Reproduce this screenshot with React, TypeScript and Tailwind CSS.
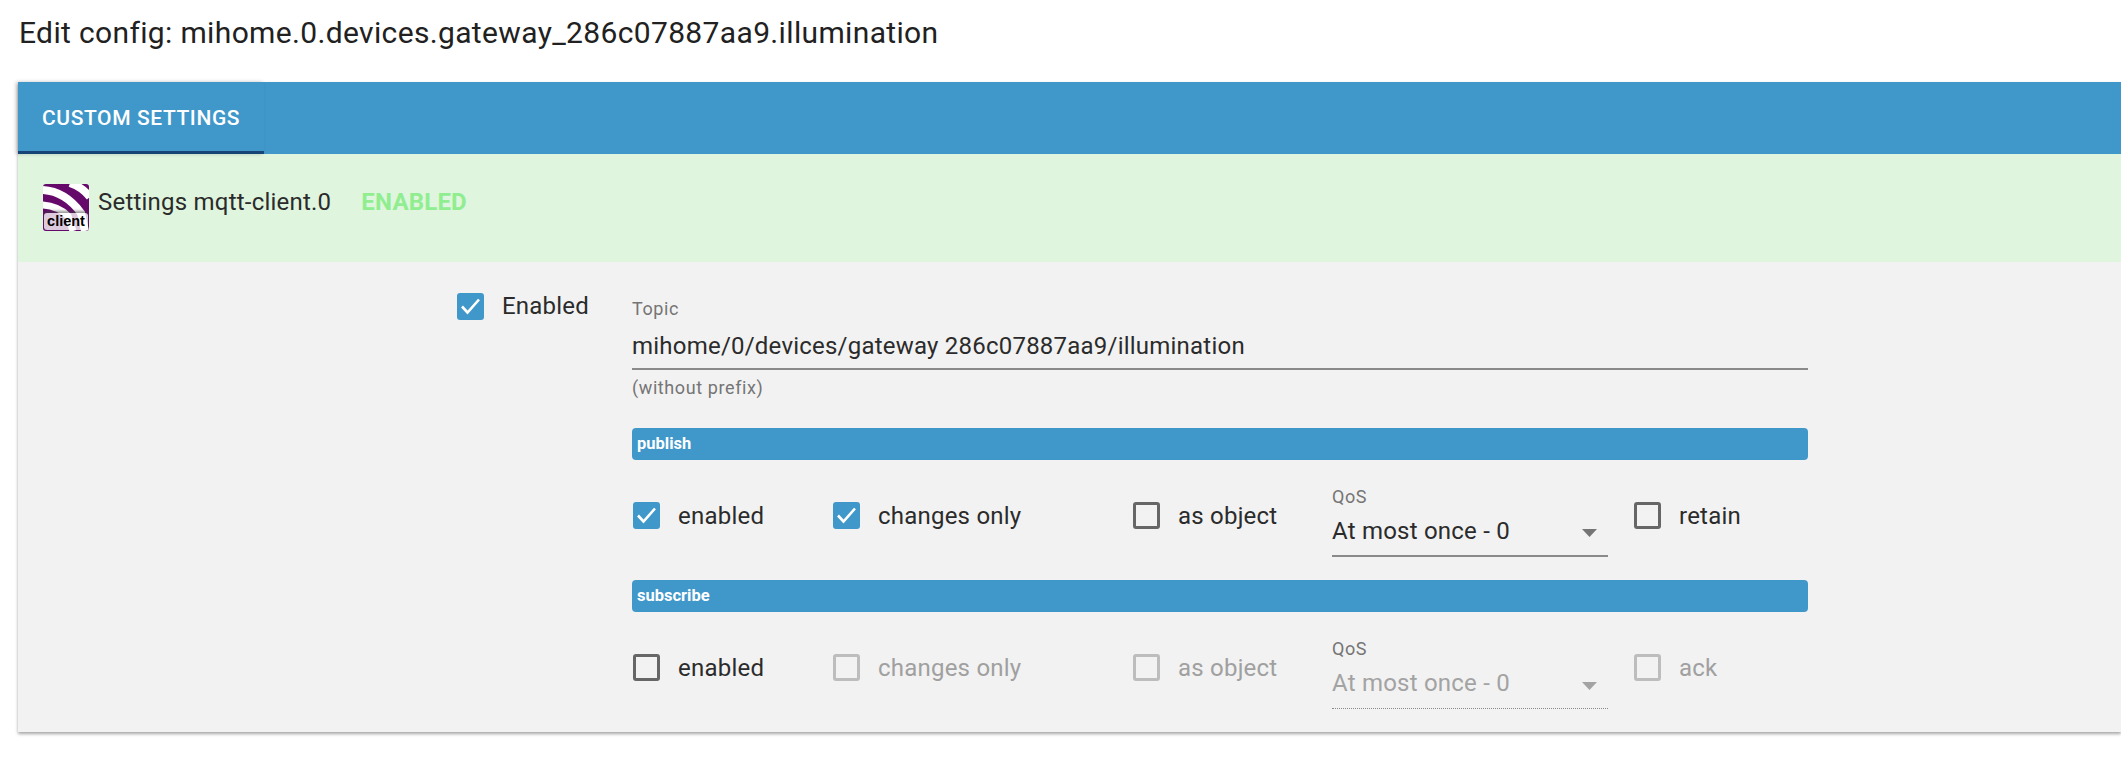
import React from "react";

function Box({ checked, disabled }: { checked?: boolean; disabled?: boolean }) {
  if (checked) {
    return (
      <svg width="27" height="27" viewBox="0 0 27 27" className="shrink-0">
        <rect x="0" y="0" width="27" height="27" rx="3" fill="#4097c9" />
        <path d="M5 13.5 L10.5 19.5 L22 6.5" fill="none" stroke="#fff" strokeWidth="2.6" />
      </svg>
    );
  }
  return (
    <div
      className={
        disabled
          ? "w-[27px] h-[27px] shrink-0 rounded-[3px] border-[3px] border-[#bdbdbd]"
          : "w-[27px] h-[27px] shrink-0 rounded-[3px] border-[3px] border-[#666666]"
      }
    />
  );
}

function Check({ label, checked, disabled, w }: { label: string; checked?: boolean; disabled?: boolean; w: string }) {
  return (
    <div className={`flex items-center gap-[18px] ${w}`}>
      <Box checked={checked} disabled={disabled} />
      <span
        className={
          disabled
            ? "pt-[1px] text-[24px] leading-[27px] tracking-[0.22px] text-[#a0a0a0]"
            : "pt-[1px] text-[24px] leading-[27px] tracking-[0.22px] text-[#2b2b2b]"
        }
      >
        {label}
      </span>
    </div>
  );
}

function Qos({ disabled }: { disabled?: boolean }) {
  return (
    <div className="w-[276px] mr-[26px] shrink-0 mt-[12px]">
      <div className="text-[18px] leading-[20px] tracking-[0.6px] text-[#757575]">QoS</div>
      <div
        className={
          disabled
            ? "flex items-center justify-between h-[50px] pr-[11px] border-b border-dotted border-[#8a8a8a]"
            : "flex items-center justify-between h-[50px] pr-[11px] border-b-[2px] border-[#8a8a8a]"
        }
      >
        <span
          className={
            disabled
              ? "text-[24px] tracking-[0.22px] text-[#a3a3a3]"
              : "text-[24px] tracking-[0.22px] text-[#2b2b2b]"
          }
        >
          At most once - 0
        </span>
        <svg width="15" height="8" viewBox="0 0 15 8" className="mt-[5px]">
          <path d="M0 0 H15 L7.5 8 Z" fill={disabled ? "#a3a3a3" : "#757575"} />
        </svg>
      </div>
    </div>
  );
}

function Section({ title }: { title: string }) {
  return (
    <div className="h-[32px] flex items-center pl-[5px] rounded-[4px] bg-[#4097c9] text-white text-[16.5px] font-bold">
      {title}
    </div>
  );
}

function ClientIcon() {
  return (
    <div className="relative w-[46px] h-[47px] shrink-0 rounded-[3px] overflow-hidden bg-[#650a6b]">
      <svg width="46" height="47" viewBox="0 0 46 47" className="block">
        <path d="M27 -1 Q39 3 47 13" fill="none" stroke="#fff" strokeWidth="8" />
        <path d="M-1 6 Q22 7 38 29 L42 47" fill="none" stroke="#fff" strokeWidth="8" />
        <path d="M-1 21 Q15 22 25 32 L30 47" fill="none" stroke="#fff" strokeWidth="7" />
      </svg>
      <div className="absolute left-[1px] right-[1px] bottom-[1px] h-[17px] rounded-[3px] bg-[#ffffffc8] shadow-[0_-2px_3px_rgba(60,60,60,0.55)] flex items-center justify-center text-[14.5px] leading-none font-bold text-black font-['Liberation_Sans',sans-serif]">
        client
      </div>
    </div>
  );
}

export default function App() {
  return (
    <div className="w-[2121px] h-[777px] bg-white overflow-hidden font-['Roboto',sans-serif]">
      <h1 className="h-[82px] pt-[15px] pl-[19px] text-[30px] leading-[36px] tracking-[0.35px] font-normal text-[#212121]">
        Edit config: mihome.0.devices.gateway_286c07887aa9.illumination
      </h1>
      <div className="ml-[18px] shadow-[0_2px_3px_rgba(0,0,0,0.35)]">
        <div className="h-[72px] bg-[#4097c9] flex">
          <div className="w-[246px] h-full border-b-[3px] border-[#164477] pl-[24px] pt-[4px] flex items-center text-[21px] tracking-[0.6px] font-medium text-white shadow-[-2px_0_4px_rgba(0,0,0,0.2)]">
            CUSTOM SETTINGS
          </div>
        </div>
        <div className="h-[108px] bg-[#dff5de] pl-[25px] pt-[30px] flex items-start">
          <ClientIcon />
          <span className="ml-[9px] mt-[5px] text-[24px] leading-[27px] tracking-[0.22px] text-[#2b2b2b]">
            Settings mqtt-client.0
          </span>
          <span className="ml-[30px] mt-[5px] text-[24px] leading-[27px] tracking-[0.2px] font-bold text-[#90ee90]">ENABLED</span>
        </div>
        <div className="h-[470px] bg-[#f2f2f2] flex items-start pt-[30px] pl-[439px]">
          <div className="w-[175px] shrink-0">
            <Check label="Enabled" checked w="" />
          </div>
          <div className="w-[1176px]">
            <div className="text-[18px] leading-[20px] tracking-[0.6px] text-[#757575] mt-[7px]">Topic</div>
            <div className="h-[51px] pt-[5px] flex items-center border-b-[2px] border-[#8a8a8a] text-[24px] tracking-[0.22px] text-[#2b2b2b]">
              mihome/0/devices/gateway 286c07887aa9/illumination
            </div>
            <div className="mt-[8px] text-[18px] leading-[20px] tracking-[0.6px] text-[#757575]">(without prefix)</div>
            <div className="mt-[30px]">
              <Section title="publish" />
            </div>
            <div className="mt-[42px] h-[27px] flex items-center pl-[1px]">
              <Check label="enabled" checked w="w-[200px]" />
              <Check label="changes only" checked w="w-[300px]" />
              <Check label="as object" w="w-[199px]" />
              <Qos />
              <Check label="retain" w="" />
            </div>
            <div className="mt-[51px]">
              <Section title="subscribe" />
            </div>
            <div className="mt-[42px] h-[27px] flex items-center pl-[1px]">
              <Check label="enabled" w="w-[200px]" />
              <Check label="changes only" disabled w="w-[300px]" />
              <Check label="as object" disabled w="w-[199px]" />
              <Qos disabled />
              <Check label="ack" disabled w="" />
            </div>
          </div>
        </div>
      </div>
    </div>
  );
}
